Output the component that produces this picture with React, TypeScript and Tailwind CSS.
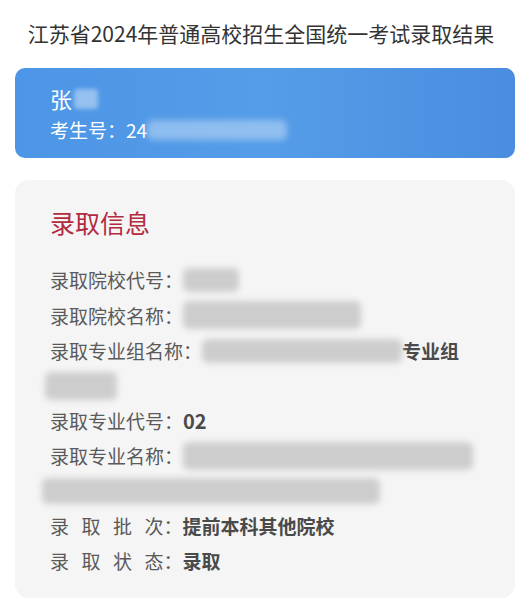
import React from "react";

const font = { fontFamily: '"Noto Sans CJK SC", "Noto Sans", sans-serif' };

function Blur({ w, h = 24, className = "" }: { w: number; h?: number; className?: string }) {
  return (
    <span
      className={`inline-block align-middle rounded-md bg-[#cdcdcd] blur-[3px] ${className}`}
      style={{ width: w, height: h }}
    />
  );
}

export default function App() {
  return (
    <div className="w-full h-[613px] bg-white px-[15px] pt-[16px]" style={font}>
      <h1 className="pr-[8px] text-center text-[21px] leading-[34px] text-[#333]">
        江苏省2024年普通高校招生全国统一考试录取结果
      </h1>

      {/* candidate card */}
      <div className="mt-[18px] h-[90px] rounded-[10px] bg-gradient-to-r from-[#4d95e6] via-[#559de8] to-[#4a8de0] pl-[35px] pt-[15px] text-white">
        <div className="flex items-center text-[22px] leading-[31px]">
          张
          <span className="ml-[2px] inline-block h-[20px] w-[24px] rounded-sm bg-white/40 blur-[2px]" />
        </div>
        <div className="mt-[1px] flex items-center text-[19px] leading-[29px]">
          考生号：24
          <span className="inline-block h-[20px] w-[140px] rounded-md bg-white/35 blur-[3px]" />
        </div>
      </div>

      {/* admission info */}
      <div className="mt-[22px] h-[418px] rounded-[14px] bg-[#f5f5f5] pl-[35px] pr-[30px] pt-[24px] text-[19px] text-[#5a5a5a]">
        <h2 className="text-[25px] leading-[36px] text-[#b22b40]">录取信息</h2>
        <div className="mt-[22px] leading-[35.5px]">
          <div className="flex items-center">
            录取院校代号：<Blur w={56} />
          </div>
          <div className="flex items-center">
            录取院校名称：<Blur w={178} h={28} />
          </div>
          <div className="flex items-center">
            录取专业组名称：<Blur w={200} />
            <span className="font-bold text-[#4a4a4a]">专业组</span>
          </div>
          <div className="-ml-[5px] flex h-[34px] items-center">
            <Blur w={72} h={28} />
          </div>
          <div className="flex items-center">
            录取专业代号：<span className="font-bold text-[20px] text-[#4a4a4a]">02</span>
          </div>
          <div className="flex items-center">
            录取专业名称：<Blur w={290} h={28} />
          </div>
          <div className="-ml-[8px] flex h-[34px] items-center">
            <Blur w={338} h={26} />
          </div>
          <div className="flex items-center">
            <span className="tracking-[12.5px]">录取批</span>次：
            <span className="font-bold text-[#4a4a4a]">提前本科其他院校</span>
          </div>
          <div className="flex items-center">
            <span className="tracking-[12.5px]">录取状</span>态：
            <span className="font-bold text-[#4a4a4a]">录取</span>
          </div>
        </div>
      </div>
    </div>
  );
}
